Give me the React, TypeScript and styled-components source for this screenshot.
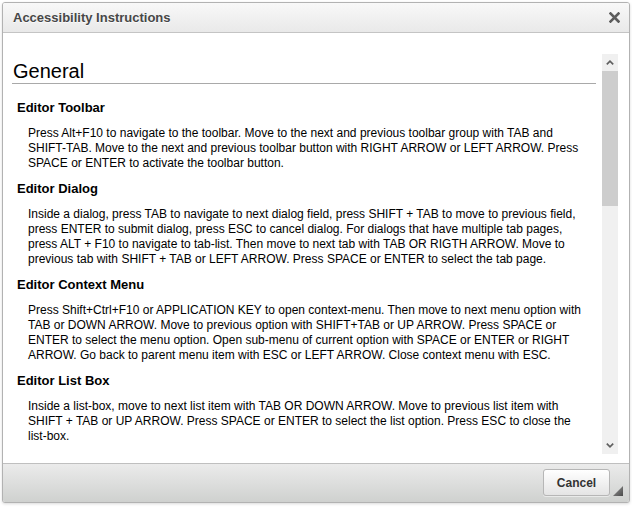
import React from "react";
import styled, { createGlobalStyle } from "styled-components";

const GlobalStyle = createGlobalStyle`
  html, body { margin: 0; padding: 0; background: #fff; }
  body { font-family: "Liberation Sans", Arial, sans-serif; }
`;

const Page = styled.div`
  width: 632px;
  height: 507px;
  padding: 2px 0 0 2px;
  box-sizing: border-box;
`;

const Dialog = styled.div`
  width: 628px;
  height: 501px;
  box-sizing: border-box;
  border: 1px solid #b2b2b2;
  border-radius: 3px;
  display: flex;
  flex-direction: column;
  background: #fff;
  box-shadow: 0 1px 3px rgba(0, 0, 0, 0.15);
  overflow: hidden;
`;

const TitleBar = styled.div`
  height: 30px;
  box-sizing: border-box;
  border-bottom: 1px solid #c4c4c4;
  background: linear-gradient(to bottom, #f8f8f8 0%, #e9e9e9 100%);
  display: flex;
  align-items: center;
  justify-content: space-between;
  padding: 0 9px 0 10px;
  flex: none;
`;

const Title = styled.div`
  font-size: 13px;
  font-weight: bold;
  color: #474747;
  text-shadow: 0 1px 0 rgba(255, 255, 255, 0.75);
  line-height: 29px;
`;

const CloseButton = styled.div`
  width: 12px;
  height: 12px;
  display: flex;
  align-items: center;
  justify-content: center;
  margin-top: -1px;
`;

const Body = styled.div`
  height: 430px;
  box-sizing: border-box;
  padding: 21px 11px 9px 9px;
  display: flex;
  flex: none;
`;

const ScrollArea = styled.div`
  flex: 1;
  display: flex;
  min-width: 0;
`;

const Content = styled.div`
  flex: 1;
  min-width: 0;
  overflow: hidden;
  padding-top: 6px;
  color: #000;
`;

const MainHeading = styled.h1`
  margin: 0 6px 0 0;
  padding-left: 1px;
  font-size: 20px;
  font-weight: normal;
  line-height: 23px;
  border-bottom: 1px solid #a9a9a9;
`;

const Sections = styled.div`
  margin-top: 16px;
`;

const SectionTitle = styled.h2`
  margin: 0 0 11px 5px;
  font-size: 13px;
  font-weight: bold;
  line-height: 15px;
`;

const SectionText = styled.p`
  margin: 0 14px 11px 16px;
  font-size: 12px;
  line-height: 14.75px;
`;

const Scrollbar = styled.div`
  width: 16px;
  flex: none;
  background: #f0f0f0;
  display: flex;
  flex-direction: column;
`;

const ScrollButton = styled.div`
  height: 17px;
  flex: none;
  display: flex;
  align-items: center;
  justify-content: center;
`;

const Thumb = styled.div`
  height: 135px;
  flex: none;
  background: #cdcdcd;
`;

const Track = styled.div`
  flex: 1;
`;

const Footer = styled.div`
  position: relative;
  height: 39px;
  box-sizing: border-box;
  border-top: 1px solid #bfbfbf;
  background: linear-gradient(to bottom, #ebebeb 0%, #cfd1cf 100%);
  display: flex;
  justify-content: flex-end;
  align-items: flex-start;
  padding: 5px 19px 0 0;
  flex: none;
`;

const CancelButton = styled.button`
  width: 67px;
  height: 27px;
  box-sizing: border-box;
  border: 1px solid #b6b6b6;
  border-radius: 3px;
  background: linear-gradient(to bottom, #ffffff 0%, #e4e4e4 100%);
  box-shadow: 0 1px 0 rgba(255, 255, 255, 0.5);
  font-family: "Liberation Sans", Arial, sans-serif;
  font-size: 12px;
  font-weight: bold;
  color: #333;
  padding: 0;
  cursor: pointer;
`;

const ResizeGrip = styled.div`
  position: absolute;
  right: 6px;
  bottom: 6px;
  width: 10px;
  height: 10px;
  line-height: 0;
`;

const Chevron = ({ down }: { down?: boolean }) => (
  <svg width="8" height="5" viewBox="0 0 8 5" style={down ? { transform: "rotate(180deg)" } : undefined}>
    <path d="M0.8 4.4 L4 1.2 L7.2 4.4" fill="none" stroke="#606060" strokeWidth="1.7" />
  </svg>
);

const sections = [
  {
    title: "Editor Toolbar",
    text: "Press Alt+F10 to navigate to the toolbar. Move to the next and previous toolbar group with TAB and SHIFT-TAB. Move to the next and previous toolbar button with RIGHT ARROW or LEFT ARROW. Press SPACE or ENTER to activate the toolbar button.",
  },
  {
    title: "Editor Dialog",
    text: "Inside a dialog, press TAB to navigate to next dialog field, press SHIFT + TAB to move to previous field, press ENTER to submit dialog, press ESC to cancel dialog. For dialogs that have multiple tab pages, press ALT + F10 to navigate to tab-list. Then move to next tab with TAB OR RIGTH ARROW. Move to previous tab with SHIFT + TAB or LEFT ARROW. Press SPACE or ENTER to select the tab page.",
  },
  {
    title: "Editor Context Menu",
    text: "Press Shift+Ctrl+F10 or APPLICATION KEY to open context-menu. Then move to next menu option with TAB or DOWN ARROW. Move to previous option with SHIFT+TAB or UP ARROW. Press SPACE or ENTER to select the menu option. Open sub-menu of current option with SPACE or ENTER or RIGHT ARROW. Go back to parent menu item with ESC or LEFT ARROW. Close context menu with ESC.",
  },
  {
    title: "Editor List Box",
    text: "Inside a list-box, move to next list item with TAB OR DOWN ARROW. Move to previous list item with SHIFT + TAB or UP ARROW. Press SPACE or ENTER to select the list option. Press ESC to close the list-box.",
  },
];

export default function App() {
  return (
    <Page>
      <GlobalStyle />
      <Dialog>
        <TitleBar>
          <Title>Accessibility Instructions</Title>
          <CloseButton>
            <svg width="11" height="11" viewBox="0 0 11 11">
              <path d="M1.5 1.5 L9.5 9.5 M9.5 1.5 L1.5 9.5" stroke="#5c5c5c" strokeWidth="2.6" strokeLinecap="square" />
            </svg>
          </CloseButton>
        </TitleBar>
        <Body>
          <ScrollArea>
            <Content>
              <MainHeading>General</MainHeading>
              <Sections>
                {sections.map((s) => (
                  <div key={s.title}>
                    <SectionTitle>{s.title}</SectionTitle>
                    <SectionText>{s.text}</SectionText>
                  </div>
                ))}
              </Sections>
            </Content>
            <Scrollbar>
              <ScrollButton>
                <Chevron />
              </ScrollButton>
              <Thumb />
              <Track />
              <ScrollButton>
                <Chevron down />
              </ScrollButton>
            </Scrollbar>
          </ScrollArea>
        </Body>
        <Footer>
          <CancelButton>Cancel</CancelButton>
          <ResizeGrip>
            <svg width="10" height="10" viewBox="0 0 10 10">
              <defs>
                <linearGradient id="grip" x1="0" y1="0" x2="1" y2="1">
                  <stop offset="0" stopColor="#9a9a9a" />
                  <stop offset="1" stopColor="#4a4a4a" />
                </linearGradient>
              </defs>
              <polygon points="10,0 10,10 0,10" fill="url(#grip)" />
            </svg>
          </ResizeGrip>
        </Footer>
      </Dialog>
    </Page>
  );
}
